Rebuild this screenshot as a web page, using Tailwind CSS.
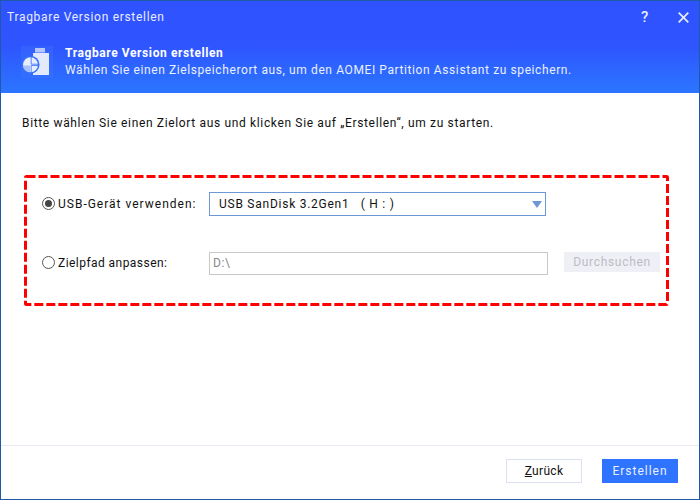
<!DOCTYPE html>
<html><head><meta charset="utf-8"><script src="https://cdn.jsdelivr.net/npm/@tailwindcss/browser@4"></script></head>
<body class="m-0">
<div class="w-[700px] h-[500px] flex flex-col bg-white border border-[#1f5aa8] font-['Roboto','Liberation_Sans',sans-serif] text-[12px] tracking-[0.6px] text-[#111] overflow-hidden">
  <header class="h-[92px] shrink-0 flex flex-col bg-gradient-to-b from-[#2f52ff] via-[#2f55ff] to-[#2c75ff] text-white">
    <div class="h-[32px] flex items-center pl-[6px] pr-[10px] text-[#e8edff]">
      <span class="flex-1 tracking-[0.7px]">Tragbare Version erstellen</span>
      <span class="text-[15px] font-medium w-[20px] text-center mr-[23px]">?</span>
      <svg class="w-[11px] h-[11px]" viewBox="0 0 11 11"><path d="M.7 .7L10.3 10.3M10.3 .7L.7 10.3" stroke="#e8edff" stroke-width="1.7"/></svg>
    </div>
    <div class="flex items-center pl-[20px] mt-[12px]">
      <svg class="w-[32px] h-[32px] shrink-0 mr-[12px]" viewBox="0 0 32 32">
        <rect width="32" height="32" fill="#3f75fb" opacity=".35"/>
        <rect x="14" y="2" width="10" height="4.5" fill="#b4c6fb"/>
        <rect x="12" y="7" width="16" height="22" fill="#e3eafe"/>
        <circle cx="9.5" cy="18.7" r="9" fill="#3570fd"/>
        <circle cx="9.5" cy="18.7" r="7.5" fill="#e6edff"/>
        <path d="M2 19.5H9V26.2A7.5 7.5 0 0 1 2 19.5Z" fill="#a9c0fc"/>
        <path d="M10.2 11V18.2H17V19.5H10.2V26" stroke="#3570fd" stroke-width=".8" fill="none"/>
      </svg>
      <div class="leading-[17px] text-[#eaf0ff]">
        <div class="font-bold text-white">Tragbare Version erstellen</div>
        <div>Wählen Sie einen Zielspeicherort aus, um den AOMEI Partition Assistant zu speichern.</div>
      </div>
    </div>
  </header>
  <main class="flex-1 flex flex-col">
    <p class="mt-[22px] ml-[21px] leading-[16px] tracking-[0.65px]">Bitte wählen Sie einen Zielort aus und klicken Sie auf „Erstellen“, um zu starten.</p>
    <section class="relative mt-[44px] ml-[23px] w-[645px] h-[131px] flex flex-col pl-[18px] pt-[17px]">
      <svg class="absolute inset-0 w-[645px] h-[131px]" viewBox="0 0 645 131" fill="none"><rect x="1.5" y="1.5" width="642" height="128" rx="1" stroke="#ff0000" stroke-width="3" stroke-dasharray="9 3"/></svg>
      <div class="flex items-center h-[24px]">
        <span class="w-[13px] h-[13px] rounded-full border border-[#555] flex items-center justify-center mr-[3px] -translate-y-[1px]"><span class="w-[7px] h-[7px] rounded-full bg-[#444]"></span></span>
        <span class="w-[151px] tracking-[1px]">USB-Gerät verwenden:</span>
        <div class="w-[337px] h-[24px] border border-[#6e97d6] flex items-center pl-[9px] pr-[3px] justify-between">
          <span class="tracking-[0.75px]">USB SanDisk 3.2Gen1 &nbsp;&nbsp;( H : )</span>
          <span class="w-0 h-0 border-x-[5px] border-x-transparent border-t-[7px] border-t-[#6e97d6]"></span>
        </div>
      </div>
      <div class="flex items-center h-[24px] mt-[35px]">
        <span class="w-[13px] h-[13px] rounded-full border border-[#555] mr-[3px] -translate-y-[1px]"></span>
        <span class="w-[151px] tracking-[0.45px]">Zielpfad anpassen:</span>
        <div class="w-[339px] h-[23px] border border-[#c8c8c8] flex items-center pl-[3px] text-[#8a8a8a]">D:\</div>
        <div class="ml-[16px] w-[96px] h-[20px] bg-[#eff0f5] flex items-center justify-center text-[#bcbcc4] tracking-[0.7px] -translate-y-[1px]">Durchsuchen</div>
      </div>
    </section>
    <footer class="mt-auto h-[54px] border-t border-[#e6e8f2] flex items-start justify-end gap-[20px] pt-[13px] pr-[21px]">
      <button class="w-[76px] h-[24px] border border-[#dbe1ee] bg-white text-[#111] flex items-center justify-center tracking-[0.3px]"><span><u>Z</u>urück</span></button>
      <button class="w-[76px] h-[24px] bg-[#2f74ff] text-[#e8f0ff] flex items-center justify-center tracking-[1px]">Erstellen</button>
    </footer>
  </main>
</div>
</body></html>
